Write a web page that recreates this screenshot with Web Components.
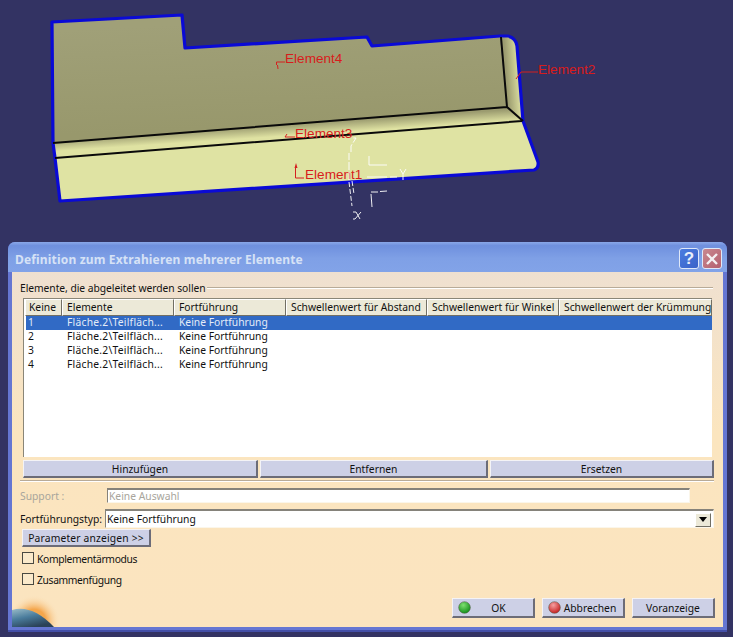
<!DOCTYPE html>
<html lang="de">
<head>
<meta charset="utf-8">
<title>Definition zum Extrahieren mehrerer Elemente</title>
<style>
  html, body { margin: 0; height: 637px; overflow: hidden; background: #333363; }
  body { font-family: "Noto Sans", "Liberation Sans", sans-serif; font-size: 10.3px; color: #111; }
</style>
</head>
<body>
<cad-viewport></cad-viewport>
<xp-window heading="Definition zum Extrahieren mehrerer Elemente">
  <extract-table></extract-table>
  <div style="display:grid;grid-template-columns:235px 228px 224px;gap:2px;margin:3px 0 0 3px;">
    <cat-button style="height:18px;">Hinzufügen</cat-button>
    <cat-button style="height:18px;">Entfernen</cat-button>
    <cat-button style="height:18px;">Ersetzen</cat-button>
  </div>
  <div style="height:2px;margin-top:2px;background:linear-gradient(#b8ab98 50%,#fff 50%);"></div>
  <form-row label="Support :" value="Keine Auswahl" disabled></form-row>
  <form-row label="Fortführungstyp:" value="Keine Fortführung" combo></form-row>
  <cat-button style="width:129px;height:18px;margin:1px 0 0 2px;letter-spacing:0.17px;">Parameter anzeigen &gt;&gt;</cat-button>
  <check-row style="margin-top:5px;">Komplementärmodus</check-row>
  <check-row style="margin-top:9px;">Zusammenfügung</check-row>
  <div slot="footer" style="display:flex;gap:7px;justify-content:flex-end;padding-right:8px;">
    <cat-button lamp="green" style="width:83px;height:20px;">OK</cat-button>
    <cat-button lamp="red" style="width:83px;height:20px;">Abbrechen</cat-button>
    <cat-button style="width:83px;height:20px;">Voranzeige</cat-button>
  </div>
</xp-window>

<script>
class CadViewport extends HTMLElement {
  constructor() {
    super();
    this.attachShadow({ mode: "open" });
    this.shadowRoot.innerHTML = `
      <style>
        :host { display: block; height: 242px; }
        svg { display: block; }
        text { font-family: "Liberation Sans", sans-serif; font-size: 13.6px; fill: #d81c1c; }
      </style>
      <svg width="733" height="242" viewBox="0 0 733 242">
        <defs>
          <linearGradient id="fillet" gradientUnits="userSpaceOnUse" x1="280" y1="125" x2="281" y2="140">
            <stop offset="0" stop-color="#9c9c70"/><stop offset="0.75" stop-color="#dfe2a2"/>
          </linearGradient>
          <linearGradient id="side" gradientUnits="userSpaceOnUse" x1="506" y1="70" x2="521" y2="69">
            <stop offset="0" stop-color="#9c9c70"/><stop offset="0.9" stop-color="#dfe2a2"/>
          </linearGradient>
          <linearGradient id="wall" gradientUnits="userSpaceOnUse" x1="270" y1="20" x2="275" y2="125">
            <stop offset="0" stop-color="#a0a078"/><stop offset="1" stop-color="#98986c"/>
          </linearGradient>
        </defs>
        <path d="M52 22L182 15L185 48L367 37L372 46L500 36L507 107L53 143Z" fill="url(#wall)"/>
        <path d="M53 143L507 107L523 121L55 158Z" fill="url(#fillet)"/>
        <path d="M55 158L523 121L538 162Q539 168 534 170L60 201Z" fill="#dfe3a3"/>
        <path d="M500 36L508 36Q516 38 517 46L523 121L507 107Z" fill="url(#side)"/>
        <path d="M53 143L55 158M53 143L52 22L182 15L185 48L367 37L372 46L500 36H508Q516 38 517 46L523 121L538 162Q539 168 534 170L60 201L55 158"
          fill="none" stroke="#0a0ad6" stroke-width="3.200" stroke-linejoin="round"/>
        <path d="M53 143L507 107M55 158L522 121M501 37L507 107L523 121" fill="none" stroke="#0a0a0a" stroke-width="2"/>

        <g fill="none" stroke="#d42020" stroke-width="1">
          <path d="M285 62H276.500V65M277.500 65L278 69"/>
          <path d="M295 137H285L287 134"/>
          <path d="M304 178H295.500V166"/>
          <path d="M538 72H521L516 79"/>
        </g>
        <path d="M296 163l1.500 5h-3z" fill="#d42020"/>
        <text x="285" y="63">Element4</text>
        <text x="295" y="138">Element3</text>
        <text x="305" y="179">Element1</text>
        <text x="538" y="74">Element2</text>

        <g fill="none" stroke="#fff" stroke-width="1" opacity="0.92">
          <path d="M349 180V153M351 152V146L356 138H352" stroke-dasharray="8 2"/>
          <path d="M349 182L352 206M352 181L354 194" stroke-dasharray="5 2"/>
          <path d="M369 156V165H387"/>
          <path d="M367 177H397" stroke-dasharray="20 3"/>
          <path d="M400 169L403 174L406 169M403 174V180"/>
          <path d="M387 191L380 191.500M378 192H371M371 194L372 207"/>
          <path d="M353 212H356L360 219M361 212L355 219H353"/>
        </g>
      </svg>`;
  }
}

class XpWindow extends HTMLElement {
  constructor() {
    super();
    this.attachShadow({ mode: "open" });
    this.shadowRoot.innerHTML = `
      <style>
        :host {
          display: flex;
          flex-direction: column;
          width: 719px;
          height: 390px;
          margin-left: 8px;
          box-sizing: border-box;
          border-radius: 7px 7px 0 0;
          background: #6576d2;
          box-shadow: inset 0 -2px #434fa8;
        }
        #title {
          height: 30px;
          flex: none;
          box-sizing: border-box;
          display: flex;
          align-items: center;
          padding: 3px 5px 0 7px;
          border-radius: 7px 7px 0 0;
          background: linear-gradient(#8aa8e8 0, #6f90de 12%, #7fa0e6 55%, #82a3e8 100%);
        }
        h1 {
          flex: 1;
          margin: 0;
          padding-top: 2px;
          font: bold 12px "Noto Sans", "Liberation Sans", sans-serif;
          letter-spacing: 0.17px;
          color: #d6e2f6;
        }
        .cap {
          width: 20px;
          height: 21px;
          margin-left: 3px;
          box-sizing: border-box;
          border: 1px solid #dfe8f8;
          border-radius: 3px;
          display: grid;
          place-items: center;
          font: bold 17px "Liberation Sans", sans-serif;
          color: #e8eefa;
        }
        #help { background: linear-gradient(135deg, #4a7ce0, #3a62c8); }
        #close { background: linear-gradient(135deg, #c98890, #b4606e); }
        #body {
          flex: 1;
          min-height: 0;
          margin: 0 4px 5px;
          padding: 8px 9px 0 8px;
          display: flex;
          flex-direction: column;
          background: linear-gradient(#efe0d0, #fbe5bf 45%, #fbe4bf);
          position: relative;
        }
        #group { display: flex; align-items: center; height: 16px; padding-right: 1px; white-space: nowrap; letter-spacing: -0.05px; }
        #group::after { content: ""; flex: 1; height: 2px; margin-left: 1px; background: linear-gradient(#b8ab98 50%, #fff 50%); }
        #main { flex: 1; }
        #foot { position: absolute; left: 0; right: 0; bottom: 9px; }
        #globe { position: absolute; left: 0; bottom: 0; }
      </style>
      <div id="title">
        <h1></h1>
        <div class="cap" id="help">?</div>
        <div class="cap" id="close">
          <svg width="14" height="14" viewBox="0 0 14 14"><path d="M2 2L12 12M12 2L2 12" stroke="#f4f0f2" stroke-width="2.400"/></svg>
        </div>
      </div>
      <div id="body">
        <svg id="globe" width="50" height="32" viewBox="0 0 50 32">
          <defs>
            <radialGradient id="glow" cx="22" cy="26" r="26" gradientUnits="userSpaceOnUse">
              <stop offset="0.45" stop-color="#f4a64c"/><stop offset="1" stop-color="#fbe4bf" stop-opacity="0"/>
            </radialGradient>
            <linearGradient id="earth" x1="0" y1="0" x2="0.500" y2="1">
              <stop offset="0" stop-color="#9abcc8"/><stop offset="0.5" stop-color="#4a7c9c"/><stop offset="1" stop-color="#2a4258"/>
            </linearGradient>
          </defs>
          <rect width="50" height="32" fill="url(#glow)"/>
          <path d="M0 15Q20 9 42 32H0Z" fill="url(#earth)"/>
        </svg>
        <div id="group">Elemente, die abgeleitet werden sollen</div>
        <div id="main"><slot></slot></div>
        <div id="foot"><slot name="footer"></slot></div>
      </div>`;
    this.shadowRoot.querySelector("h1").textContent = this.getAttribute("heading");
  }
}

class ExtractTable extends HTMLElement {
  constructor() {
    super();
    this.attachShadow({ mode: "open" });
    const cols = [["Keine", 37], ["Elemente", 112], ["Fortführung", 112], ["Schwellenwert für Abstand", 141], ["Schwellenwert für Winkel", 132], ["Schwellenwert der Krümmung", 153]];
    const head = cols.map(c => `<div class="h" style="width:${c[1]}px">${c[0]}</div>`).join("");
    const rows = [1, 2, 3, 4].map(n => `
      <div class="r${n === 1 ? " sel" : ""}">
        <span style="width:38px">${n}</span>
        <span class="name" style="width:112px">Fläche.2\\Teilfläch...</span>
        <span>Keine Fortführung</span>
      </div>`).join("");
    this.shadowRoot.innerHTML = `
      <style>
        :host {
          display: block;
          height: 159px;
          margin: 2px 0 0 3px;
          width: 689px;
          box-sizing: border-box;
          background: #fff;
          border: 1px solid #8a8678;
          border-width: 1px 0 0 1px;
        }
        #head { display: flex; height: 17px; padding: 0 0 0 1px; }
        .h {
          box-sizing: border-box;
          flex: none;
          height: 17px;
          line-height: 14px;
          padding-left: 4px;
          white-space: nowrap;
          overflow: hidden;
          background: #ece9d8;
          border: 1px solid;
          border-color: #fff #716f64 #716f64 #fff;
        }
        .h:first-child { padding-left: 3px; }
        .r { display: flex; height: 14px; line-height: 12px; margin-left: 2px; white-space: nowrap; }
        .r span { display: block; padding-left: 2px; box-sizing: border-box; flex: none; }
        .r span + span { padding-left: 3px; }
        .r .name { letter-spacing: 0.24px; }
        .sel { background: #316ac5; color: #e4ecf8; }
      </style>
      <div id="head">${head}</div>
      ${rows}`;
  }
}

class CatButton extends HTMLElement {
  constructor() {
    super();
    this.attachShadow({ mode: "open" });
    const lamp = this.getAttribute("lamp");
    const colors = { green: ["#7ee070", "#0c8a14"], red: ["#f4a0a0", "#c41818"] };
    const icon = lamp ? `
      <svg width="13" height="13" viewBox="0 0 14 14">
        <defs><radialGradient id="l" cx="0.400" cy="0.300" r="0.750">
          <stop offset="0" stop-color="${colors[lamp][0]}"/><stop offset="1" stop-color="${colors[lamp][1]}"/>
        </radialGradient></defs>
        <circle cx="7" cy="7" r="6.300" fill="url(#l)" stroke="#5c6050" stroke-width="0.600"/>
      </svg>` : "";
    this.shadowRoot.innerHTML = `
      <style>
        :host {
          display: block;
          box-sizing: border-box;
          background: #cdd0e6;
          border: 1px solid;
          border-color: #f4f3f6 #6c6c78 #6c6c78 #f4f3f6;
          border-width: 1px 2px 2px 1px;
        }
        div { position: relative; display: flex; align-items: center; justify-content: center; height: 100%; padding-top: 1px; white-space: nowrap; line-height: 1; box-sizing: border-box; }
        svg { position: absolute; left: 5px; top: 2px; }
        :host([lamp="red"]) div { padding-left: 14px; }
        :host([lamp="green"]) div { padding-left: 11px; }
      </style>
      <div>${icon}<slot></slot></div>`;
  }
}

class FormRow extends HTMLElement {
  constructor() {
    super();
    this.attachShadow({ mode: "open" });
    const combo = this.hasAttribute("combo");
    this.shadowRoot.innerHTML = `
      <style>
        :host { display: flex; align-items: center; margin-top: 6px; height: 15px; }
        :host([combo]) { height: 19px; }
        :host([disabled]) { color: #a8a59c; }
        #label { width: 87px; flex: none; white-space: nowrap; }
        :host([combo]) #label { width: 85px; }
        #field {
          box-sizing: border-box;
          display: flex;
          align-items: center;
          height: 100%;
          width: 583px;
          padding-left: 1px;
          background: #fff;
          border: 1px solid;
          border-color: #85827a #fbf6ea #fbf6ea #85827a;
          border-top-width: 2px;
        }
        :host([combo]) #field { width: 609px; }
        span { flex: 1; }
        i {
          width: 16px; height: 14px; margin: 1px 2px 0 0; flex: none;
          display: grid; place-items: center; box-sizing: border-box;
          background: #ece9d8; border: 1px solid; border-color: #fff #716f64 #716f64 #fff;
        }
      </style>
      <div id="label"></div>
      <div id="field"><span></span>${combo ? '<i><svg width="8" height="5" viewBox="0 0 8 5"><path d="M0 0H8L4 5Z" fill="#000"/></svg></i>' : ""}</div>`;
    this.shadowRoot.querySelector("#label").textContent = this.getAttribute("label");
    this.shadowRoot.querySelector("span").textContent = this.getAttribute("value");
  }
}

class CheckRow extends HTMLElement {
  constructor() {
    super();
    this.attachShadow({ mode: "open" });
    this.shadowRoot.innerHTML = `
      <style>
        :host { display: flex; align-items: center; gap: 3px; height: 12px; margin-left: 2px; white-space: nowrap; letter-spacing: -0.35px; }
        i { width: 12px; height: 12px; box-sizing: border-box; border: 1px solid #4a4a42; background: #fbeacb; flex: none; }
        span { padding-top: 1px; }
      </style>
      <i></i><span><slot></slot></span>`;
  }
}

customElements.define("cad-viewport", CadViewport);
customElements.define("xp-window", XpWindow);
customElements.define("extract-table", ExtractTable);
customElements.define("cat-button", CatButton);
customElements.define("form-row", FormRow);
customElements.define("check-row", CheckRow);
</script>
</body>
</html>
